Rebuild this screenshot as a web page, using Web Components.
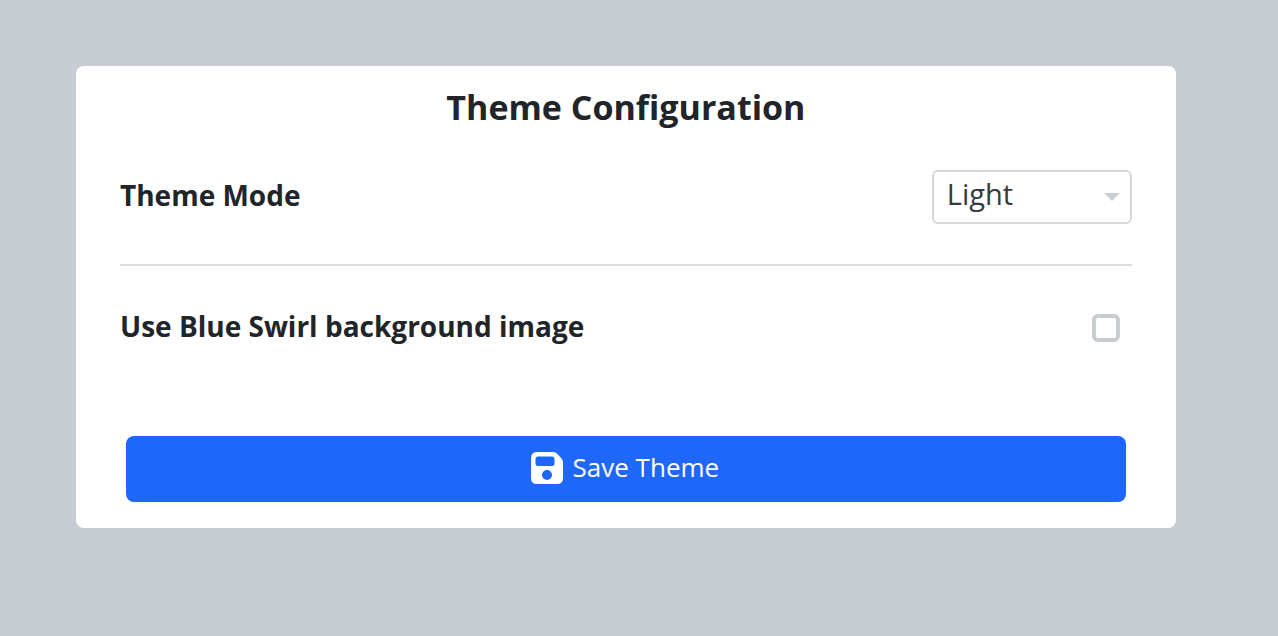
<!DOCTYPE html>
<html lang="en">
<head>
<meta charset="utf-8">
<meta name="viewport" content="width=device-width, initial-scale=1">
<title>Theme Configuration</title>
<style>
  html { background: #c8ccd3; }
  body { margin: 0; font-family: "Open Sans", "Noto Sans", sans-serif; color: #212529; }
</style>
</head>
<body>
<theme-settings></theme-settings>

<template id="panel-card">
  <style>
    :host { display: block; background: #fff; border-radius: 8px; padding: 16px 44px 26px; }
    h1 { margin: 0 0 38px; font-size: 34px; line-height: 50px; font-weight: 700; text-align: center; }
  </style>
  <h1><slot name="title"></slot></h1>
  <slot></slot>
</template>

<template id="setting-row">
  <style>
    :host { display: flex; align-items: center; justify-content: space-between; gap: 24px; min-height: 54px; }
  </style>
  <slot name="label"></slot>
  <slot></slot>
</template>

<template id="save-button">
  <style>
    :host { display: block; padding: 0 6px; }
    button {
      display: flex; align-items: center; justify-content: center; gap: 10px;
      box-sizing: border-box; width: 100%; min-height: 66px; padding: 0 2px 4px 0;
      border: 0; border-radius: 8px; background: #1f66fb; color: #fff;
      font: inherit; font-size: 26px; line-height: 36px; cursor: pointer;
    }
    svg { width: 32px; height: 32px; margin-top: 2px; fill: currentColor; }
  </style>
  <button type="button">
    <svg viewBox="0 0 32 32" aria-hidden="true"><path fill-rule="evenodd" d="M6 0H22Q24.500 0 26.500 2L30.500 6.500Q32 8 32 10.500V26Q32 32 26 32H6Q0 32 0 26V6Q0 0 6 0zM7 4.500Q4.500 4.500 4.500 7V11.500Q4.500 14 7 14H21Q23.500 14 23.500 11.500V7Q23.500 4.500 21 4.500zM16 18A5 5 0 1 0 16 28A5 5 0 1 0 16 18z"/></svg>
    <span><slot></slot></span>
  </button>
</template>

<template id="theme-settings">
  <style>
    :host { display: block; padding: 66px 8% 66px 76px; }
    label { padding-bottom: 4px; font-size: 28px; line-height: 40px; font-weight: 700; }
    .picker { display: grid; align-items: center; width: 200px; }
    .picker > * { grid-area: 1 / 1; }
    select {
      appearance: none; box-sizing: border-box; width: 100%; height: 54px;
      margin: 0; padding: 0 40px 8px 13px; border: 2px solid #d5dade; border-radius: 6px;
      background: #fff; color: #343a40; font: inherit; font-size: 29px;
    }
    .picker svg { justify-self: end; width: 16px; height: 8px; margin-right: 12px; fill: #c8ced5; pointer-events: none; }
    input {
      appearance: none; box-sizing: border-box; width: 28px; height: 28px;
      margin: 0 12px 0 0; border: 4px solid #c8cdd4; border-radius: 6px; background: #fff;
    }
    input:checked { background: #1f66fb; border-color: #1f66fb; }
    hr { margin: 40px 0 35px; border: 0; border-top: 2px solid #d9dde1; }
    save-button { margin-top: 81px; }
  </style>
  <panel-card>
    <span slot="title">Theme Configuration</span>
    <setting-row>
      <label slot="label" for="mode">Theme Mode</label>
      <span class="picker">
        <select id="mode"><option>Light</option><option>Dark</option></select>
        <svg viewBox="0 0 16 8" aria-hidden="true"><path d="M0 0H16L8 8z"/></svg>
      </span>
    </setting-row>
    <hr>
    <setting-row>
      <label slot="label" for="swirl">Use Blue Swirl background image</label>
      <input type="checkbox" id="swirl">
    </setting-row>
    <save-button>Save Theme</save-button>
  </panel-card>
</template>

<script>
  for (const name of ["panel-card", "setting-row", "save-button", "theme-settings"]) {
    customElements.define(name, class extends HTMLElement {
      constructor() {
        super();
        this.attachShadow({ mode: "open" })
          .append(document.getElementById(name).content.cloneNode(true));
      }
    });
  }
</script>
</body>
</html>
